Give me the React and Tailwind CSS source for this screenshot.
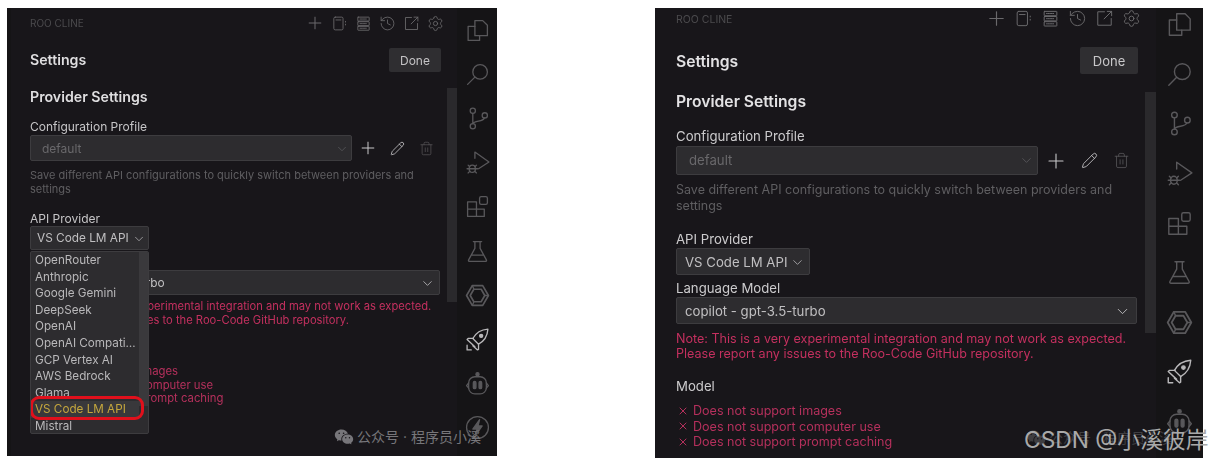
import { ChevronDown, History, Pencil, Plus, Settings, Trash2, X } from 'lucide-react';
import { RiWechatFill } from 'react-icons/ri';

const FONT = { fontFamily: 'Inter, "Noto Sans CJK SC", sans-serif' };

const thin = { fill: 'none', stroke: 'currentColor', strokeWidth: 1.25, strokeLinecap: 'round', strokeLinejoin: 'round' };

function Svg({ size, children }) {
  return <svg width={size} height={size} viewBox="0 0 24 24" {...thin}>{children}</svg>;
}

const BookIcon = ({ size }) => (
  <Svg size={size}>
    <rect x="4" y="3" width="13" height="18" rx="2" />
    <path d="M7 7h7M20.500 9v1M20.500 13v1" />
  </Svg>
);
const ServerIcon = ({ size }) => (
  <Svg size={size}>
    <rect x="4" y="3" width="16" height="5.500" rx="0.500" />
    <rect x="4" y="9.500" width="16" height="5.500" rx="0.500" />
    <rect x="4" y="16" width="16" height="5.500" rx="0.500" />
    <path d="M7 5.700h10M7 12.200h10M7 18.700h10" strokeDasharray="1 1" />
  </Svg>
);
const ExternalIcon = ({ size }) => (
  <Svg size={size}>
    <path d="M12 3.500H3.500v17h17V12M21 3l-9.500 9.500M15.500 3H21v5.500" />
  </Svg>
);
const FilesIcon = ({ size }) => (
  <Svg size={size}>
    <path d="M9.500 2.500h7.500l4.500 4.500v10h-12z" />
    <path d="M9.500 8H3v13.500h11V17" />
  </Svg>
);
const SearchIcon = ({ size }) => (
  <Svg size={size}>
    <circle cx="14.500" cy="9.500" r="7" />
    <path d="M9.500 14.500L2.500 21.500" />
  </Svg>
);
const BranchIcon = ({ size }) => (
  <Svg size={size}>
    <circle cx="7.500" cy="4.500" r="2.500" />
    <circle cx="7.500" cy="19.500" r="2.500" />
    <circle cx="19" cy="9" r="2.500" />
    <path d="M7.500 7v10M18.500 11.500c-1 4-9.500 2-11 5.500" />
  </Svg>
);
const DebugIcon = ({ size }) => (
  <Svg size={size}>
    <path d="M9.500 8V2L23 11.500l-10 6.500" />
    <ellipse cx="7" cy="18" rx="3" ry="3.500" />
    <path d="M3 14.500l1.500 1.500M11 14.500L9.500 16M2 18h2M10 18h2M3 22l1.500-1.500M11 22l-1.500-1.500M4 18h6" />
  </Svg>
);
const ExtensionsIcon = ({ size }) => (
  <Svg size={size}>
    <path d="M2.500 7.500h8.500v14H2.500zM2.500 14.500H18.500v7H11" />
    <rect x="14" y="2.500" width="7.500" height="7.500" rx="1.500" />
  </Svg>
);
const BeakerIcon = ({ size }) => (
  <Svg size={size}>
    <path d="M8 2.500h8M9.500 2.500V9L3.500 20c-.5 1 .2 1.500 1 1.500h15c.8 0 1.500-.5 1-1.500L14.500 9V2.500M6.500 15.500h11" />
  </Svg>
);
const RingIcon = ({ size }) => (
  <Svg size={size}>
    <path d="M7 2.500h10L22.500 12 17 21.500H7L1.500 12z" strokeWidth="1.600" />
    <path d="M8.500 6h7L19 12l-3.500 6h-7L5 12z" strokeWidth="1.600" />
    <path d="M7 2.500L8.500 6M22.500 12H19M7 21.500L8.500 18" />
  </Svg>
);
const RocketIcon = ({ size }) => (
  <Svg size={size}>
    <path d="M22 2c-7 .5-11.500 3.500-14.500 9l5.500 5.500C18.500 13.500 21.500 9 22 2z" />
    <circle cx="15.500" cy="8.500" r="1.500" fill="currentColor" />
    <path d="M8 11H3l-1 1 7.500 7M13 16.500v5l-1 .5-4.500-4M2 17.500V22h4" />
  </Svg>
);
const RobotIcon = ({ size }) => (
  <Svg size={size}>
    <rect x="3.500" y="5.500" width="17" height="16.500" rx="6" />
    <circle cx="12" cy="3" r="1.500" fill="currentColor" />
    <path d="M3.500 11.500L1.500 14l2 2.500M20.500 11.500l2 2.500-2 2.500" />
    <rect x="8" y="10" width="2.500" height="7" rx="1.200" fill="currentColor" />
    <rect x="13.500" y="10" width="2.500" height="7" rx="1.200" fill="currentColor" />
  </Svg>
);
const BoltIcon = ({ size }) => (
  <Svg size={size}>
    <circle cx="12" cy="12" r="10.500" />
    <path d="M14 4.500L7.500 13.500h4L10 19.500l6.500-9h-4z" fill="currentColor" />
  </Svg>
);

const activityIcons = [FilesIcon, SearchIcon, BranchIcon, DebugIcon, ExtensionsIcon, BeakerIcon, RingIcon, RocketIcon, RobotIcon, BoltIcon];

const headerIcons = [Plus, BookIcon, ServerIcon, History, ExternalIcon, Settings];

const limits = ['Does not support images', 'Does not support computer use', 'Does not support prompt caching'];

const providers = ['OpenRouter', 'Anthropic', 'Google Gemini', 'DeepSeek', 'OpenAI', 'OpenAI Compatible', 'GCP Vertex AI', 'AWS Bedrock', 'Glama', 'VS Code LM API', 'Mistral'];

function ActivityBar({ size, boxClass, barClass }) {
  return (
    <div className={`shrink-0 bg-[#151416] flex flex-col items-center text-[#59585b] ${barClass}`}>
      {activityIcons.map((Icon, i) => (
        <div key={i} className={`shrink-0 flex items-center justify-center ${boxClass} ${i === 7 ? 'text-[#b9b8ba]' : ''}`}>
          <Icon size={size} />
        </div>
      ))}
    </div>
  );
}

function ProviderMenu() {
  return (
    <div className="absolute left-0 top-full mt-px w-[119px] h-[183px] z-10 bg-[#2d2c2f] border border-[#3d3c3f] rounded-[2px] flex overflow-hidden">
      <div className="w-[108px]">
        {providers.map((name) => (
          <div key={name} className={`h-[16.600px] leading-[16.600px] pl-[4px] text-[11.700px] truncate ${name === 'VS Code LM API' ? 'text-[#c4a63d] bg-[#39383b]' : 'text-[#b9b8ba]'}`}>
            {name}
          </div>
        ))}
      </div>
      <div className="flex-1 h-[154px] bg-[#3a393c]" />
      <div className="absolute left-[-1px] top-[144px] w-[114px] h-[24px] rounded-[9px] border-[3.500px] border-[#e0101c]" />
    </div>
  );
}

function SmallPanel() {
  return (
    <div className="w-[490px] h-[448px] shrink-0 flex overflow-hidden bg-[#18161a] border-l-4 border-[#151416] blur-[0.4px]">
      <div className="w-[436px] pl-[19px]">
        <div className="h-[30px] flex items-center justify-between">
          <span className="text-[10px] text-[#4b4a4d]">ROO CLINE</span>
          <div className="flex items-center text-[#6a696c]">
            {headerIcons.map((Icon, i) => (
              <div key={i} className="w-[24px] flex justify-center"><Icon size={i === 0 ? 20 : 17} strokeWidth={1.2} /></div>
            ))}
          </div>
        </div>
        <div className="mt-[10px] h-[24px] pr-[6px] flex items-center justify-between">
          <span className="text-[14.200px] font-semibold text-[#dfdee0]">Settings</span>
          <div className="w-[52px] h-[24px] pt-px bg-[#2f2e31] rounded-[2px] text-[12px] text-[#c4c3c5] flex items-center justify-center">Done</div>
        </div>
        <div className="mt-[16px] h-[18px] leading-[18px] text-[14.200px] font-semibold text-[#dfdee0]">Provider Settings</div>
        <div className="mt-[13px] h-[16px] leading-[16px] text-[12px] text-[#c6c5c7]">Configuration Profile</div>
        <div className="flex items-center">
          <div className="w-[322px] h-[26px] pl-[11px] pr-[2px] pt-[2px] bg-[#2d2c2f] border border-[#3d3c3f] rounded-[2px] text-[12px] text-[#69686b] flex items-center justify-between">
            default
            <ChevronDown size={14} strokeWidth={1.2} className="text-[#5f5e61]" />
          </div>
          <Plus size={20} strokeWidth={1.2} className="ml-[6px] text-[#c9c8ca]" />
          <Pencil size={15} strokeWidth={1.3} className="ml-[12px] text-[#c9c8ca]" />
          <Trash2 size={15} strokeWidth={1.2} className="ml-[14px] text-[#555457]" />
        </div>
        <p className="mt-[8px] w-[400px] leading-[13.500px] text-[11px] text-[#5f5e61]">Save different API configurations to quickly switch between providers and settings</p>
        <div className="mt-[14px] h-[16px] leading-[18px] text-[12px] text-[#c6c5c7]">API Provider</div>
        <div className="relative w-[119px]">
          <div className="h-[24px] pl-[6px] pr-[1px] pt-px bg-[#2d2c2f] border border-[#3d3c3f] rounded-[2px] text-[11.800px] text-[#c0bfc1] flex items-center justify-between">
            VS Code LM API
            <ChevronDown size={14} strokeWidth={1.2} className="mr-[1px]" />
          </div>
          <ProviderMenu />
        </div>
        <div className="mt-[4px] h-[16px] leading-[16px] text-[12px] text-[#c6c5c7]">Language Model</div>
        <div className="w-[410px] h-[25px] pl-[7px] pr-[4px] pt-px bg-[#2d2c2f] border border-[#3d3c3f] rounded-[2px] text-[11.900px] text-[#c0bfc1] flex items-center justify-between">
          copilot - gpt-3.5-turbo
          <ChevronDown size={15} strokeWidth={1.3} />
        </div>
        <p className="mt-[4px] leading-[14px] text-[11.200px] text-[#c4305f]">
          Note: This is a very experimental integration and may not work as expected.<br />
          Please report any issues to the Roo-Code GitHub repository.
        </p>
        <div className="mt-[15px] h-[16px] leading-[16px] text-[12px] text-[#c6c5c7]">Model</div>
        <div className="mt-[7px] text-[11.300px] leading-[13.500px] text-[#b5305c]">
          {limits.map((t) => (
            <div key={t} className="flex items-center gap-[4px]"><X size={10} strokeWidth={2} />{t}</div>
          ))}
        </div>
      </div>
      <div className="w-[10px] shrink-0 pt-[80px]"><div className="h-[214px] bg-[#2a292c]" /></div>
      <ActivityBar size={25} boxClass="h-[44.200px] w-full" barClass="w-[40px]" />
    </div>
  );
}

function LargePanel() {
  return (
    <div className="ml-[158px] w-[548px] h-[450px] shrink-0 flex overflow-hidden bg-[#18161a] blur-[0.4px]">
      <div className="w-[490px] pl-[21px]">
        <div className="h-[21px] flex items-center justify-between">
          <span className="text-[10.500px] text-[#4b4a4d] mt-[3px]">ROO CLINE</span>
          <div className="flex items-center text-[#6a696c]">
            {headerIcons.map((Icon, i) => (
              <div key={i} className="w-[27px] flex justify-center"><Icon size={i === 0 ? 23 : 19} strokeWidth={1.2} /></div>
            ))}
          </div>
        </div>
        <div className="mt-[18px] h-[27px] pr-[7px] flex items-center justify-between">
          <span className="text-[15.700px] font-semibold text-[#e3e2e4] mt-[2px]">Settings</span>
          <div className="w-[58px] h-[27px] pt-[2px] bg-[#2f2e31] rounded-[2px] text-[13px] text-[#c9c8ca] flex items-center justify-center">Done</div>
        </div>
        <div className="mt-[18px] h-[20px] leading-[20px] text-[15.700px] font-semibold text-[#e3e2e4]">Provider Settings</div>
        <div className="mt-[15px] h-[18px] leading-[18px] text-[13.200px] text-[#cccbcd]">Configuration Profile</div>
        <div className="mt-px flex items-center">
          <div className="w-[362px] h-[29px] pl-[12px] pr-[3px] bg-[#2d2c2f] border border-[#3d3c3f] rounded-[2px] text-[13.200px] text-[#69686b] flex items-center justify-between">
            default
            <ChevronDown size={15} strokeWidth={1.2} className="text-[#5f5e61]" />
          </div>
          <Plus size={24} strokeWidth={1.1} className="ml-[6px] text-[#c9c8ca]" />
          <Pencil size={17} strokeWidth={1.2} className="ml-[13px] text-[#c9c8ca]" />
          <Trash2 size={17} strokeWidth={1.2} className="ml-[15px] text-[#555457]" />
        </div>
        <p className="mt-[7px] w-[450px] leading-[15.500px] text-[12.500px] text-[#5f5e61]">Save different API configurations to quickly switch between providers and settings</p>
        <div className="mt-[17px] h-[18px] leading-[18px] text-[13.200px] text-[#cccbcd]">API Provider</div>
        <div className="w-[134px] h-[27px] pl-[8px] pr-[4px] pt-[2px] bg-[#2d2c2f] border border-[#3d3c3f] rounded-[2px] text-[13.200px] text-[#c0bfc1] flex items-center justify-between">
          VS Code LM API
          <ChevronDown size={15} strokeWidth={1.2} />
        </div>
        <div className="mt-[4px] h-[18px] leading-[18px] text-[13.200px] text-[#cccbcd]">Language Model</div>
        <div className="w-[461px] h-[27px] pl-[8px] pr-[5px] pt-[2px] bg-[#2d2c2f] border border-[#3d3c3f] rounded-[2px] text-[13.200px] text-[#c0bfc1] flex items-center justify-between">
          copilot - gpt-3.5-turbo
          <ChevronDown size={17} strokeWidth={1.3} />
        </div>
        <p className="mt-[7px] leading-[15px] text-[12.550px] text-[#c4305f]">
          Note: This is a very experimental integration and may not work as expected.<br />
          Please report any issues to the Roo-Code GitHub repository.
        </p>
        <div className="mt-[16px] h-[18px] leading-[18px] text-[13.200px] text-[#cccbcd]">Model</div>
        <div className="mt-[8px] text-[12.550px] leading-[15.500px] text-[#b5305c]">
          {limits.map((t) => (
            <div key={t} className="flex items-center gap-[4px]"><X size={12} strokeWidth={2} className="ml-px" />{t}</div>
          ))}
        </div>
      </div>
      <div className="w-[11px] shrink-0 pt-[84px]"><div className="h-[241px] bg-[#2a292c]" /></div>
      <ActivityBar size={27} boxClass="h-[49.600px] w-full" barClass="w-[47px] -mt-[8px]" />
    </div>
  );
}

export default function App() {
  return (
    <div className="relative w-[1212px] h-[464px] overflow-hidden bg-white pt-[8px] pl-[7px] flex items-start" style={FONT}>
      <SmallPanel />
      <LargePanel />

      {/* watermarks */}
      <div className="absolute left-[334px] top-[426px] flex items-center gap-[3px] text-[14px] text-[#77767a]">
        <RiWechatFill size={20} />
        <span>公众号 · 程序员小溪</span>
      </div>
      <div className="absolute left-[1026px] top-[427px] flex items-center gap-[3px] text-[14px] text-[#3f3e41]">
        <RiWechatFill size={20} />
        <span>公众号 · 程序员小溪</span>
      </div>
      <div className="absolute left-[1024px] top-[425px] text-[22.800px] leading-[30px] text-[#a9a9a9]">CSDN @小溪彼岸</div>
    </div>
  );
}
